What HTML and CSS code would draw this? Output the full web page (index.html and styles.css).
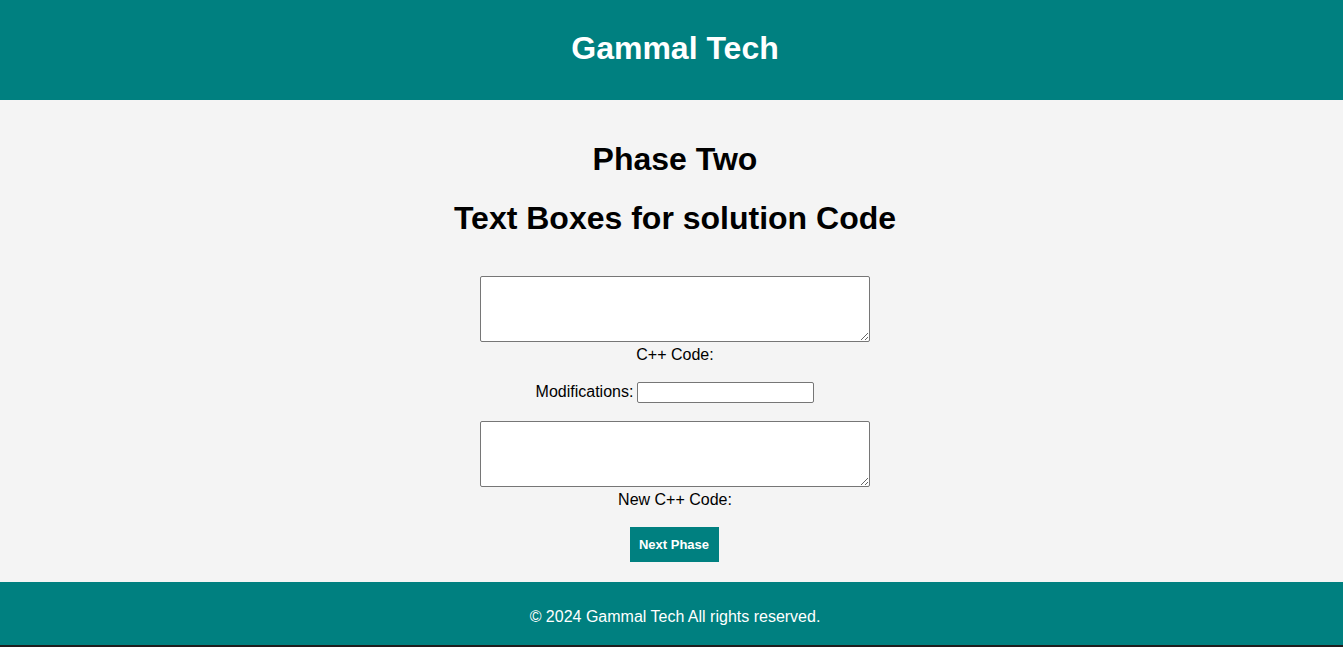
FILE: index.html
```html
<!DOCTYPE html>
<html lang="en">
<head>
<meta charset="utf-8">
<title>Gammal Tech - Phase Two</title>
<link rel="stylesheet" href="styles.css">
</head>
<body>
<header class="site-header">
  <h1 class="brand">Gammal Tech</h1>
</header>
<main class="main">
  <h1 class="heading">Phase Two</h1>
  <h1 class="heading">Text Boxes for solution Code</h1>
  <form class="code-form">
    <textarea class="code-box" id="cpp"></textarea>
    <label class="box-label" for="cpp">C++ Code:</label>
    <div class="mod-row">
      <label class="mod-label" for="mods">Modifications:</label>
      <input class="mod-input" type="text" id="mods">
    </div>
    <textarea class="code-box" id="newcpp"></textarea>
    <label class="box-label" for="newcpp">New C++ Code:</label>
    <button class="next-btn" type="button">Next Phase</button>
  </form>
</main>
<footer class="site-footer">
  <p class="copy">© 2024 Gammal Tech All rights reserved.</p>
</footer>
</body>
</html>
```

FILE: styles.css
```css
html {
  background: #1e1e1e;
}
body {
  margin: 0;
  min-width: 1350px;
  font-family: "Liberation Sans", Arial, sans-serif;
  background: #f4f4f4;
  color: #000;
}
.site-header {
  background: #008080;
  color: #fff;
  height: 100px;
  display: flex;
  align-items: center;
  justify-content: center;
}
.brand {
  margin: 0;
  font-size: 32px;
  line-height: 37px;
  font-weight: bold;
  position: relative;
  top: -2px;
}
.main {
  padding: 20px 0 20px;
  display: flex;
  flex-direction: column;
  align-items: center;
}
.heading {
  font-size: 32px;
  line-height: 37px;
  font-weight: bold;
  margin: 21px 0 0;
}
.heading + .heading {
  margin-top: 22px;
}
.code-form {
  margin-top: 39px;
  display: flex;
  flex-direction: column;
  align-items: center;
}
.code-box {
  width: 390px;
  height: 66px;
  box-sizing: border-box;
  border: 1px solid #767676;
  border-radius: 2px;
  background: #fff;
  margin: 0;
  resize: both;
}
.box-label {
  font-size: 16px;
  line-height: 18px;
  margin-top: 4px;
}
.mod-row {
  display: flex;
  align-items: center;
  gap: 4px;
  margin: 18px 0 18px;
  height: 21px;
  font-size: 16px;
}
.mod-label {
  position: relative;
  top: -1px;
}
.mod-input {
  width: 177px;
  height: 21px;
  box-sizing: border-box;
  border: 1px solid #767676;
  border-radius: 2px;
  background: #fff;
  margin: 0;
  padding: 1px 2px;
}
.next-btn {
  margin-top: 18px;
  margin-right: 2px;
  width: 89px;
  height: 35px;
  background: #008080;
  color: #fff;
  border: none;
  font-family: "Liberation Sans", Arial, sans-serif;
  font-size: 13px;
  font-weight: bold;
  padding: 0;
}
.site-footer {
  background: #008080;
  color: #fff;
  height: 63px;
  box-sizing: border-box;
  padding-top: 26px;
  text-align: center;
}
.copy {
  margin: 0;
  font-size: 16px;
  line-height: 18px;
}
```
